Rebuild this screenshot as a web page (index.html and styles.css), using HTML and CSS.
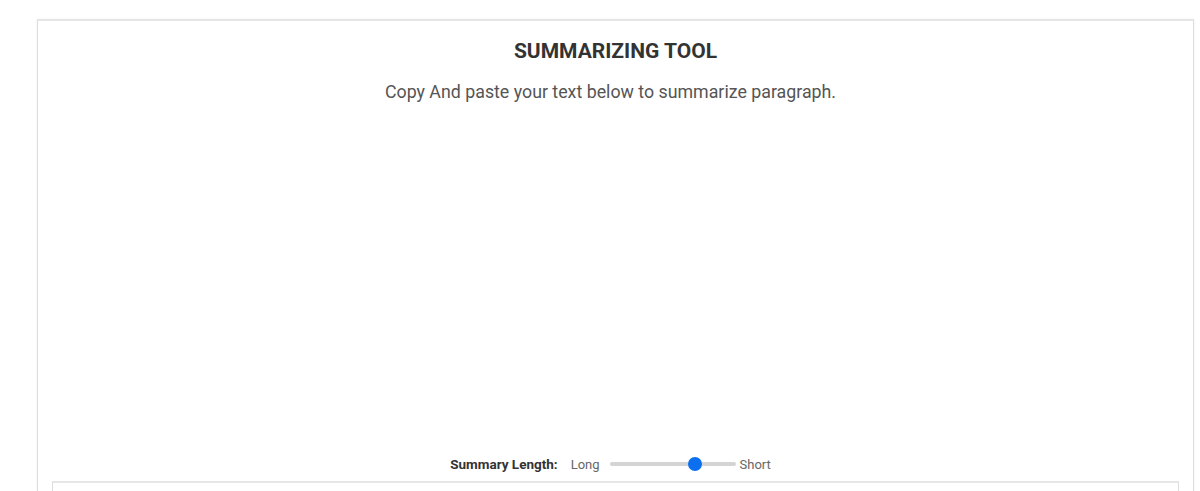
FILE: index.html
```html
<!DOCTYPE html>
<html>
<head>
<meta charset="utf-8">
<link rel="stylesheet" href="styles.css">
</head>
<body>
<div class="page">
  <div class="card">
    <h1 class="title">SUMMARIZING TOOL</h1>
    <p class="subtitle">Copy And paste your text below to summarize paragraph.</p>
    <div class="spacer"></div>
    <div class="length-row">
      <span class="length-label">Summary Length:</span>
      <span class="length-end">Long</span>
      <span class="slider">
        <span class="slider-track"></span>
        <span class="slider-thumb"></span>
      </span>
      <span class="length-end short">Short</span>
    </div>
    <div class="output-box"></div>
  </div>
</div>
</body>
</html>
```
FILE: styles.css
```css
html, body {
  margin: 0;
  padding: 0;
  background: #ffffff;
  font-family: Roboto, "Liberation Sans", Arial, sans-serif;
}
.page {
  padding: 19px 6px 0 37px;
}
.card {
  border: 1px solid #dcdcdc;
  border-top: 2px solid #e6e6e6;
  border-bottom: none;
  box-shadow: 0 0 3px rgba(0,0,0,0.06);
  display: flex;
  flex-direction: column;
  align-items: center;
  padding: 17px 14px 0 14px;
}
.title {
  margin: 0;
  font-size: 21px;
  line-height: 26px;
  font-weight: 700;
  color: #333333;
}
.subtitle {
  margin: 16px 0 0 0;
  font-size: 17.8px;
  line-height: 24px;
  color: #555555;
  padding-right: 10px;
}
.spacer {
  height: 350px;
  flex-shrink: 0;
}
.length-row {
  display: flex;
  align-items: center;
  height: 20px;
  font-size: 13px;
  color: #666666;
  margin-right: 10px;
}
.length-label {
  font-weight: 700;
  color: #333333;
  margin-right: 13px;
  font-size: 13.5px;
}
.slider {
  position: relative;
  width: 126px;
  height: 14px;
  margin: 0 4px 0 10px;
  display: flex;
  align-items: center;
}
.slider-track {
  width: 100%;
  height: 4px;
  border-radius: 2px;
  background: #d4d4d4;
}
.slider-thumb {
  position: absolute;
  left: 78px;
  top: 0;
  width: 14px;
  height: 14px;
  border-radius: 50%;
  background: #0b6ff0;
}
.output-box {
  align-self: stretch;
  margin-top: 7px;
  height: 8px;
  border: 1px solid #dddddd;
  border-top: 2px solid #e6e6e6;
  border-bottom: none;
}
```
